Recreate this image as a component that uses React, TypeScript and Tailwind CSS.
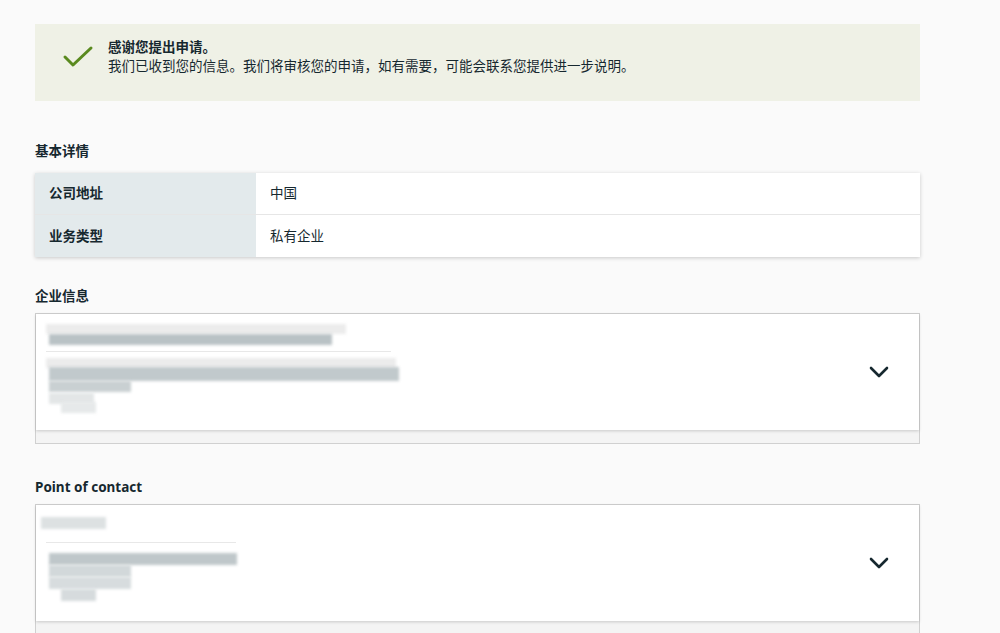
import React from "react";

const font = { fontFamily: '"Noto Sans", "Noto Sans CJK SC", sans-serif' };

function Chevron() {
  return (
    <svg width="20" height="12" viewBox="0 0 20 12" fill="none">
      <path d="M2 2 L10 10 L18 2" stroke="#16282f" strokeWidth="2.6" strokeLinecap="round" strokeLinejoin="round" />
    </svg>
  );
}

function Blocks({ rows }: { rows: { top: number; left: number; w: number; h: number; c: string }[] }) {
  return (
    <>
      {rows.map((r, i) => (
        <div
          key={i}
          className="absolute blur-[1.5px]"
          style={{ top: r.top, left: r.left, width: r.w, height: r.h, background: r.c }}
        />
      ))}
    </>
  );
}

function Card({ height, rows, line }: { height: number; rows: any[]; line: number }) {
  return (
    <div className="border border-[#d0d0d0] bg-[#f4f4f4] pb-[13px]">
      <div className="relative flex items-center justify-end bg-white pr-[30px] shadow-[0_1px_3px_rgba(0,0,0,0.18)]" style={{ height }}>
        <Blocks rows={rows} />
        <div className="absolute left-[10px] h-px bg-[#e8e8e8]" style={{ top: 37, width: line }} />
        <Chevron />
      </div>
    </div>
  );
}

export default function App() {
  return (
    <div className="min-h-[633px] w-[1000px] overflow-hidden bg-[#fafafa]" style={font}>
      <div className="w-[885px] ml-[35px] pt-[24px]">
        <div className="flex h-[77px] items-start bg-[#eff1e6] pl-[27px] pt-[14px]">
          <svg width="32" height="24" viewBox="0 0 32 24" className="mr-[14px] mt-[7px]">
            <path d="M3 12 L11 20 L29 3" stroke="#5a8a1f" strokeWidth="3" fill="none" strokeLinecap="round" strokeLinejoin="round" />
          </svg>
          <div className="flex flex-col text-[13.5px] leading-[19px] text-[#16282f]">
            <span className="font-bold">感谢您提出申请。</span>
            <span>我们已收到您的信息。我们将审核您的申请，如有需要，可能会联系您提供进一步说明。</span>
          </div>
        </div>

        <div className="mt-[41px] text-[13.5px] font-bold leading-[18px] text-[#16282f]">基本详情</div>
        <div className="mt-[13px] bg-white shadow-[0_1px_4px_rgba(0,0,0,0.2)] text-[13.5px] text-[#16282f]">
          <div className="flex h-[42px] border-b border-[#e6e6e6]">
            <div className="flex w-[221px] items-center bg-[#e3eaec] pl-[14px] font-bold">公司地址</div>
            <div className="flex items-center pl-[14px]">中国</div>
          </div>
          <div className="flex h-[42px]">
            <div className="flex w-[221px] items-center bg-[#e3eaec] pl-[14px] font-bold">业务类型</div>
            <div className="flex items-center pl-[14px]">私有企业</div>
          </div>
        </div>

        <div className="mt-[30px] text-[13.5px] font-bold leading-[18px] text-[#16282f]">企业信息</div>
        <div className="mt-[8px]">
          <Card
            height={116}
            line={345}
            rows={[
              { top: 10, left: 10, w: 300, h: 10, c: "#ececec" },
              { top: 20, left: 13, w: 283, h: 11, c: "#b9c2c5" },
              { top: 44, left: 10, w: 350, h: 10, c: "#ececec" },
              { top: 53, left: 13, w: 350, h: 14, c: "#c1c9cc" },
              { top: 67, left: 13, w: 82, h: 11, c: "#c9d0d2" },
              { top: 79, left: 13, w: 45, h: 11, c: "#e3e6e7" },
              { top: 88, left: 25, w: 35, h: 11, c: "#e6e9ea" },
            ]}
          />
        </div>

        <div className="mt-[34px] text-[13.5px] font-bold leading-[18px] text-[#16282f]">Point of contact</div>
        <div className="mt-[8px]">
          <Card
            height={116}
            line={190}
            rows={[
              { top: 12, left: 5, w: 65, h: 12, c: "#dde1e2" },
              { top: 48, left: 13, w: 188, h: 12, c: "#bfc7ca" },
              { top: 60, left: 13, w: 82, h: 12, c: "#d2d8da" },
              { top: 72, left: 13, w: 82, h: 12, c: "#d7dcde" },
              { top: 84, left: 25, w: 35, h: 12, c: "#d6dbdd" },
            ]}
          />
        </div>
      </div>
    </div>
  );
}
